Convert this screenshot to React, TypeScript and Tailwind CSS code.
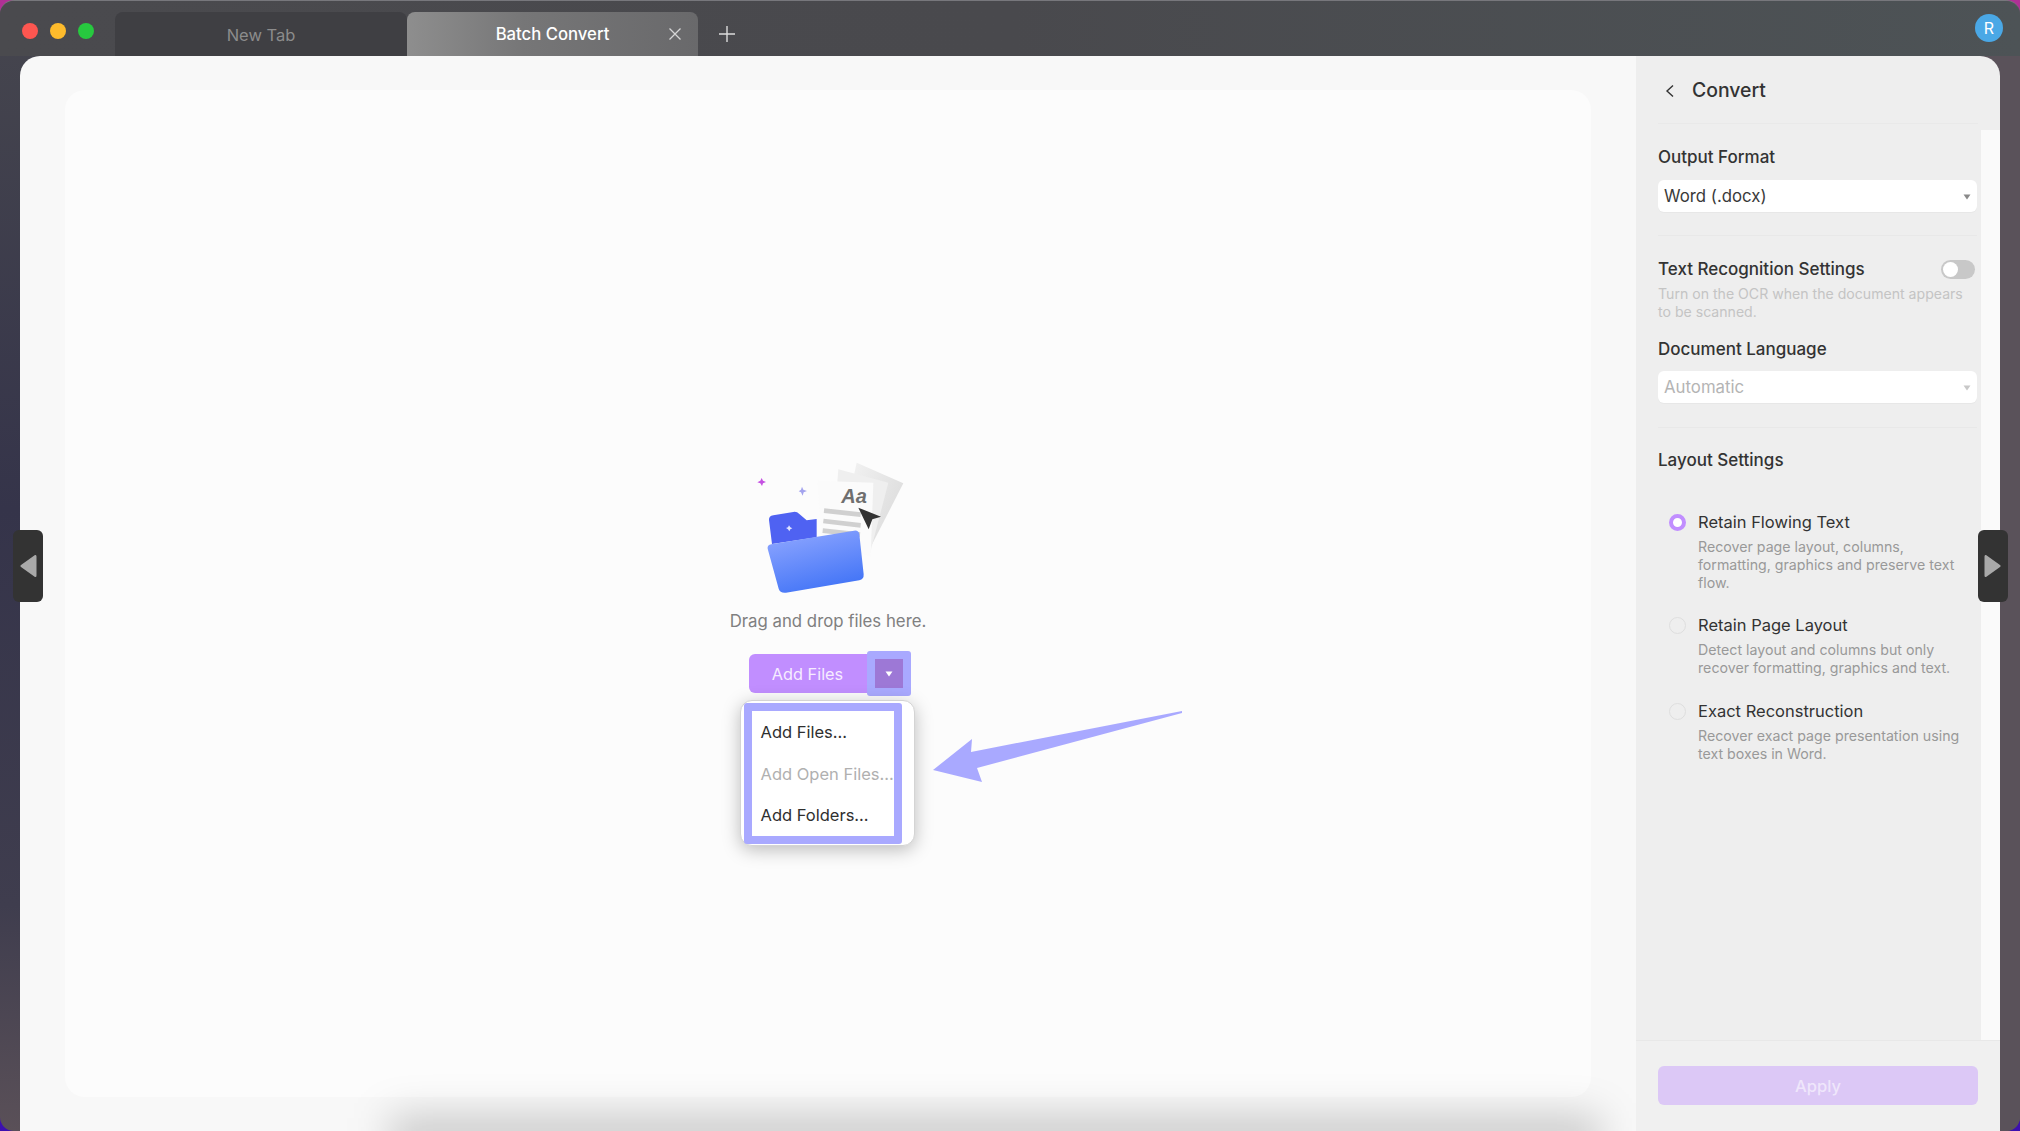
import React from "react";

function Caret({ color = "#8a8a8a" }: { color?: string }) {
  return (
    <svg width="8" height="6" viewBox="0 0 8 6" className="shrink-0">
      <path d="M0.5 0.5H7.5L4 5.5Z" fill={color} />
    </svg>
  );
}

function Select({ value, disabled }: { value: string; disabled?: boolean }) {
  return (
    <div className="flex h-8 w-[319px] items-center justify-between rounded-md bg-white pl-[6px] pr-[6px] pt-[2px] shadow-[0_1px_1px_rgba(0,0,0,0.03)]">
      <span className={disabled ? "text-[16.8px] text-[#b4b4b4]" : "text-[16.8px] text-[#3a3a3a]"}>{value}</span>
      <Caret color={disabled ? "#c8c8c8" : "#8a8a8a"} />
    </div>
  );
}

function Radio({ on }: { on?: boolean }) {
  return on ? (
    <span className="h-[17px] w-[17px] shrink-0 rounded-full border-[4px] border-[#c18eff] bg-white" />
  ) : (
    <span className="h-[17px] w-[17px] shrink-0 rounded-full border border-[#dedede] bg-[#eeeeee]" />
  );
}

function Option({ title, lines, on, top }: { title: string; lines: string[]; on?: boolean; top: string }) {
  return (
    <div className={top}>
      <div className="flex h-6 items-center gap-3 pl-[11px]">
        <Radio on={on} />
        <span className="text-[16.5px] text-[#333]">{title}</span>
      </div>
      <div className="mt-1 pl-[40px] text-[14.2px] leading-[18px] text-[#999]">
        {lines.map((l) => (
          <div key={l} className="whitespace-nowrap">{l}</div>
        ))}
      </div>
    </div>
  );
}

function Handle({ dir, cls }: { dir: "l" | "r"; cls: string }) {
  return (
    <div className={`absolute top-[530px] flex h-[72px] w-[30px] items-center justify-center rounded-md bg-[#333] ${cls}`}>
      <svg width="20" height="26" viewBox="0 0 20 26">
        <path
          d={dir === "l" ? "M17 2 L3 12 Q1.5 13 3 14 L17 24 Q18.5 24.5 18.5 22.5 V3.5 Q18.5 1.5 17 2Z" : "M3 2 L17 12 Q18.5 13 17 14 L3 24 Q1.5 24.5 1.5 22.5 V3.5 Q1.5 1.5 3 2Z"}
          fill="#a9a9a9"
        />
      </svg>
    </div>
  );
}

function Illustration() {
  return (
    <svg width="255" height="140" viewBox="0 60 765 420" className="mr-[2px]">
      <defs>
        <linearGradient id="fold" x1="0.3" y1="0" x2="0.7" y2="1">
          <stop offset="0" stopColor="#8ba4ff" />
          <stop offset="1" stopColor="#3f72f6" />
        </linearGradient>
        <linearGradient id="pg" x1="0" y1="0" x2="1" y2="0.6">
          <stop offset="0" stopColor="#f4f4f4" />
          <stop offset="1" stopColor="#dcdcdc" />
        </linearGradient>
      </defs>
      <path d="M470 68 L610 130 L510 325 L430 250Z" fill="url(#pg)" />
      <path d="M415 88 L565 128 L510 340 L400 280Z" fill="#efefef" />
      <path d="M352 122 L520 128 L512 350 L365 300Z" fill="#fbfbfb" />
      <text x="424" y="188" fontSize="60" fontWeight="700" fontStyle="italic" fill="#6f6f6f" fontFamily="Liberation Sans, sans-serif">Aa</text>
      <path d="M372 212 L482 224 M370 243 L482 256 M368 272 L480 284" stroke="#d0d0d0" strokeWidth="14" />
      <path d="M475 203 L543 230 L517 238 L506 268Z" fill="#333" />
      <path d="M207 240 Q206 228 220 226 L280 216 Q290 214 298 222 L320 241 L350 237 L350 292 L216 312Z" fill="#4f62f2" />
      <path d="M267 256 L271 262 L277 265 L271 268 L268 274 L264 268 L258 264 L264 262Z" fill="#dfe3ff" />
      <path d="M203 326 Q201 315 214 313 L462 272 Q476 270 478 283 L491 403 Q492 418 478 421 L258 458 Q240 460 236 446Z" fill="url(#fold)" />
      <path d="M185 114 L189 122 L198 126 L189 130 L186 138 L181 130 L172 127 L181 122Z" fill="#c551e2" />
      <path d="M306 140 L310 149 L321 153 L311 157 L308 167 L303 157 L296 154 L303 149Z" fill="#a3a3ee" />
    </svg>
  );
}

export default function App() {
  return (
    <div className="relative h-[1131px] w-[2020px] overflow-hidden bg-[linear-gradient(180deg,#b03095_0%,#8a2f90_30%,#3c10b0_100%)] font-['Inter',sans-serif]">
      <div className="flex h-full flex-col rounded-[14px] border-t border-[#77777c] bg-[linear-gradient(90deg,transparent_50%,#5a525a_50%),linear-gradient(180deg,#46464e_0%,#35344a_45%,#3f3d4e_80%,#5a5058_100%)]">
        {/* title bar */}
        <div className="flex h-[55px] shrink-0 items-start bg-[linear-gradient(90deg,#4a4a4e_0%,#49494d_50%,#4d5356_100%)] rounded-t-[14px]">
          <div className="ml-[22px] mt-[22px] flex gap-3">
            <span className="h-4 w-4 rounded-full bg-[#fd5650]" />
            <span className="h-4 w-4 rounded-full bg-[#febb2c]" />
            <span className="h-4 w-4 rounded-full bg-[#27c93f]" />
          </div>
          <div className="ml-[21px] mt-[11px] flex h-[44px] w-[292px] items-center justify-center rounded-t-lg bg-[#3f3f43] pt-[2px] text-[16.5px] text-[#8c8c8c]">
            New Tab
          </div>
          <div className="relative mt-[11px] flex h-[44px] w-[291px] items-center justify-center rounded-t-lg bg-[linear-gradient(90deg,#8e8e8e_0%,#767677_40%,#69696b_100%)] pt-[2px] text-[16.7px] font-medium text-white">
            Batch Convert
            <svg width="14" height="14" viewBox="0 0 14 14" className="absolute right-[16px] top-[15px]">
              <path d="M1.5 1.5L12.5 12.5M12.5 1.5L1.5 12.5" stroke="#d6d6d6" strokeWidth="1.3" />
            </svg>
          </div>
          <svg width="18" height="18" viewBox="0 0 18 18" className="ml-5 mt-6">
            <path d="M9 1V17M1 9H17" stroke="#dcdcdc" strokeWidth="1.4" />
          </svg>
          <div className="ml-auto mr-[17px] mt-[13px] flex h-7 w-7 items-center justify-center rounded-full bg-[#4aa8e6] text-[16px] text-white">
            R
          </div>
        </div>

        {/* body */}
        <div className="mx-5 flex min-h-0 flex-1 overflow-hidden rounded-t-[20px]">
          <main className="relative w-[1616px] shrink-0 overflow-hidden bg-[#f8f8f8] px-[45px] pb-[34px] pt-[34px]">
            <div className="flex h-full w-[1526px] flex-col items-center rounded-[20px] bg-[#fcfcfc] pt-[370px]">
              <Illustration />
              <div className="mt-[9px] h-6 text-[16.8px] leading-6 text-[#808080]">Drag and drop files here.</div>
              <div className="relative ml-[3px] mt-[21px] flex h-[39px] w-[162px] items-center">
                <div className="flex h-[39px] w-[118px] items-center justify-center rounded-l-md bg-[#c18eff] pt-px text-[16.3px] text-[#f6ecff]">
                  Add Files
                </div>
                <div className="flex h-[45px] w-[44px] items-center justify-center rounded-[3px] bg-[#a9a9ff]">
                  <div className="flex h-[29px] w-[28px] items-center justify-center bg-[#9d78d6]">
                    <Caret color="#ffffff" />
                  </div>
                </div>
                <div className="absolute left-[-9px] top-[46px] h-[146px] w-[175px] rounded-[12px] border border-[#d4d4d4] bg-white pl-[3px] pt-[2px] shadow-[0_4px_18px_rgba(0,0,0,0.26)]">
                  <div className="flex h-[141px] w-[158px] flex-col rounded-[3px] border-[8px] border-[#a9a9ff] bg-white text-[16.5px] text-[#2f2f2f]">
                    <div className="flex h-[42px] items-center whitespace-nowrap pl-[9px] pt-px">Add Files...</div>
                    <div className="flex h-[42px] items-center whitespace-nowrap pl-[9px] pt-px text-[#b0b0b0]">Add Open Files...</div>
                    <div className="flex h-[42px] items-center whitespace-nowrap pl-[9px] pt-px">Add Folders...</div>
                  </div>
                </div>
              </div>
            </div>
            <svg width="260" height="85" viewBox="930 705 260 85" className="absolute left-[910px] top-[649px]">
              <path d="M933 770 L972 739 L971 752 L1182 711 L1182 713 L977 768 L982 782Z" fill="#a9a9ff" />
            </svg>
            <div className="absolute bottom-[-26px] left-[370px] h-[40px] w-[1210px] bg-black/20 blur-[20px]" />
          </main>

          <aside className="flex w-[364px] shrink-0 flex-col bg-[#eeeeee]">
            <div className="mx-[22px] flex h-[68px] shrink-0 items-center border-b border-[#e9e9e9] pt-[3px]">
              <svg width="10" height="14" viewBox="0 0 10 14" className="ml-[7px]">
                <path d="M8 1.5L2 7L8 12.5" fill="none" stroke="#333" strokeWidth="1.4" />
              </svg>
              <span className="ml-[17px] text-[19.4px] font-medium text-[#333]">Convert</span>
            </div>
            <div className="flex min-h-0 flex-1">
              <div className="w-[345px] shrink-0 pl-[22px]">
                <div className="mt-[21px] h-6 text-[17px] font-medium leading-6 text-[#333]">Output Format</div>
                <div className="mt-[11px]"><Select value="Word (.docx)" /></div>
                <div className="mt-[23px] h-px w-[319px] bg-[#e8e8e8]" />
                <div className="mt-[22px] flex h-6 w-[317px] items-center justify-between">
                  <span className="text-[17px] font-medium text-[#333]">Text Recognition Settings</span>
                  <span className="-mt-[2px] flex h-[19px] w-[34px] items-center rounded-full bg-[#c8c8c8] pl-[2px]">
                    <span className="h-[15px] w-[15px] rounded-full bg-white" />
                  </span>
                </div>
                <div className="mt-[3px] w-[319px] text-[14.1px] leading-[18px] text-[#c4c4c4]">
                  <div className="whitespace-nowrap">Turn on the OCR when the document appears</div>
                  <div>to be scanned.</div>
                </div>
                <div className="mt-4 h-6 text-[17px] font-medium leading-6 text-[#333]">Document Language</div>
                <div className="mt-[10px]"><Select value="Automatic" disabled /></div>
                <div className="mt-6 h-px w-[319px] bg-[#e8e8e8]" />
                <div className="mt-5 h-6 text-[17px] font-medium leading-6 text-[#333]">Layout Settings</div>
                <Option
                  top="mt-[38px]"
                  on
                  title="Retain Flowing Text"
                  lines={["Recover page layout, columns,", "formatting, graphics and preserve text", "flow."]}
                />
                <Option
                  top="mt-[21px]"
                  title="Retain Page Layout"
                  lines={["Detect layout and columns but only", "recover formatting, graphics and text."]}
                />
                <Option
                  top="mt-[22px]"
                  title="Exact Reconstruction"
                  lines={["Recover exact page presentation using", "text boxes in Word."]}
                />
              </div>
              <div className="mt-[6px] w-[19px] shrink-0 bg-[#fafafa]" />
            </div>
            <div className="flex h-[91px] shrink-0 items-start border-t border-[#e8e8e8] bg-[#f0f0f0] pl-[22px] pt-[25px]">
              <div className="flex h-[39px] w-[320px] items-center justify-center rounded-md bg-[#dcc8f6] pt-[2px] text-[16.5px] font-medium text-[#efe6fb]">
                Apply
              </div>
            </div>
          </aside>
        </div>
      </div>
      <Handle dir="l" cls="left-[13px]" />
      <Handle dir="r" cls="left-[1978px]" />
    </div>
  );
}
